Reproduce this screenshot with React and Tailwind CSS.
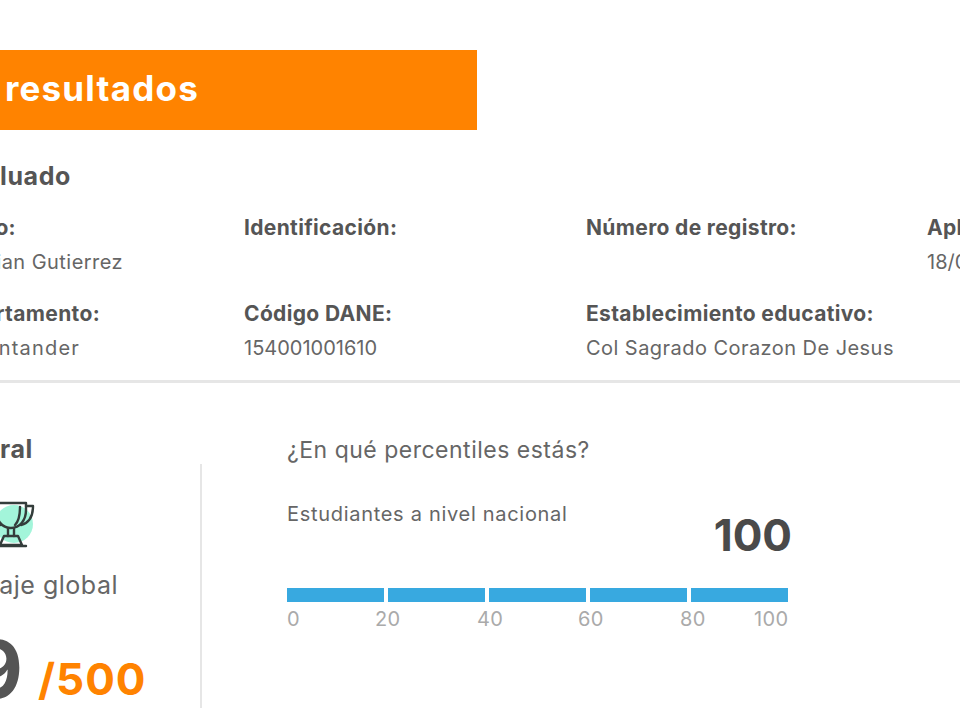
const font = { fontFamily: '"Inter", "Noto Sans", sans-serif' };

function ClipLeft({ width, className, children }) {
  return (
    <div className={`flex justify-end whitespace-nowrap ${className}`} style={{ width }}>
      <span className="shrink-0">{children}</span>
    </div>
  );
}

function Field({ label, value, first, digits, wide }) {
  const l = "text-[21px] leading-[34px] font-bold text-[#555555] whitespace-nowrap tracking-[0.35px]";
  const v = `text-[20px] leading-[34px] text-[#666666] whitespace-nowrap h-[34px] ${digits ? "tracking-[0px]" : wide ? "tracking-[1.2px]" : "tracking-[0.45px]"}`;
  return (
    <div className="flex flex-col">
      {first ? (
        <ClipLeft width={first[0]} className={l}>{label}</ClipLeft>
      ) : (
        <div className={l}>{label}</div>
      )}
      {first ? (
        <ClipLeft width={first[1]} className={v}>{value}</ClipLeft>
      ) : (
        <div className={v}>{value}</div>
      )}
    </div>
  );
}

function Trophy() {
  return (
    <svg width="60" height="50" viewBox="0 0 60 50" className="block">
      <circle cx="36" cy="24" r="19" fill="#a3f5da" />
      <g fill="none" stroke="#343d3b" strokeWidth="2.4" strokeLinejoin="round" strokeLinecap="round">
        <path d="M18 3H48V10C48 20 42 28 33 28C24 28 18 20 18 10Z" />
        <path d="M48 6H55C55 16 51 23 43 25" />
        <path d="M18 6H11C11 16 15 23 23 25" />
        <path d="M42 7C42 16 40 22 37 25" />
        <path d="M30 28V36M36 28V36" />
        <path d="M26 36H40L44 45H22Z" />
        <path d="M18 46H48" />
      </g>
    </svg>
  );
}

const ticks = ["0", "20", "40", "60", "80", "100"];

export default function App() {
  return (
    <div className="w-[960px] h-[720px] overflow-hidden bg-white flex flex-col pt-[50px]" style={font}>
      <div className="w-[477px] h-[80px] bg-[#ff8300] flex items-center shrink-0 pb-[3px]">
        <ClipLeft width={199} className="text-[35px] font-bold text-white tracking-[1.2px]">Informe de resultados</ClipLeft>
      </div>

      <ClipLeft width={71} className="mt-[30px] h-[32px] leading-[32px] text-[25px] font-bold text-[#555555] tracking-[0.6px]">Evaluado</ClipLeft>

      <div className="mt-[19px] grid grid-cols-[244px_342px_341px_33px] gap-y-[18px] items-start">
        <Field label="Nombre completo:" value="Sebastian Gutierrez" first={[16, 123]} />
        <Field label="Identificación:" value="" />
        <Field label="Número de registro:" value="" />
        <Field label="Aplicación:" value="18/08/2019" digits />
        <Field label="Departamento:" value="Norte de Santander" first={[100, 80]} wide />
        <Field label="Código DANE:" value="154001001610" digits />
        <Field label="Establecimiento educativo:" value="Col Sagrado Corazon De Jesus" />
      </div>

      <div className="mt-[15px] h-[3px] bg-[#e6e6e6] shrink-0" />

      <div className="flex items-start">
        <div className="w-[287px] shrink-0 flex flex-col">
          <ClipLeft width={33} className="mt-[50px] h-[32px] leading-[32px] text-[25px] font-bold text-[#555555] tracking-[0.6px]">General</ClipLeft>
          <div className="w-[202px] mt-[-1px] h-[244px] border-r-2 border-[#e6e6e6] flex flex-col">
            <div className="ml-[-22px] mt-[36px]"><Trophy /></div>
            <ClipLeft width={118} className="mt-[18px] h-[34px] leading-[34px] text-[25px] text-[#666666] tracking-[0.5px]">Puntaje global</ClipLeft>
            <div className="flex items-end mt-[27px]">
              <ClipLeft width={23} className="text-[80px] leading-[80px] font-bold text-[#555555]">49</ClipLeft>
              <span className="ml-[15px] mb-[5px] text-[44px] leading-[50px] font-bold text-[#ff8300] whitespace-nowrap tracking-[1px]">/500</span>
            </div>
          </div>
        </div>

        <div className="w-[505px] shrink-0 flex flex-col">
          <div className="mt-[51px] h-[32px] leading-[32px] text-[23px] text-[#666666] tracking-[0.5px] whitespace-nowrap">¿En qué percentiles estás?</div>
          <div className="mt-[32px] flex justify-between items-start">
            <div className="mt-[1px] text-[20px] leading-[30px] text-[#666666] tracking-[0.7px] whitespace-nowrap">Estudiantes a nivel nacional</div>
            <div className="mt-[12px] text-[44px] leading-[50px] font-bold text-[#4a4a4a]">100</div>
          </div>
          <div className="mt-[28px] w-[501px] flex gap-[4px]">
            {[0, 1, 2, 3, 4].map((i) => (
              <div key={i} className="h-[14px] flex-1 bg-[#38a9e0]" />
            ))}
          </div>
          <div className="mt-[3px] w-[501px] grid grid-cols-[88px_102px_101px_102px_74px_34px] text-[20px] leading-[28px] text-[#aaaaaa] tracking-[0.4px]">
            {ticks.map((t) => (
              <span key={t}>{t}</span>
            ))}
          </div>
        </div>
      </div>
    </div>
  );
}
